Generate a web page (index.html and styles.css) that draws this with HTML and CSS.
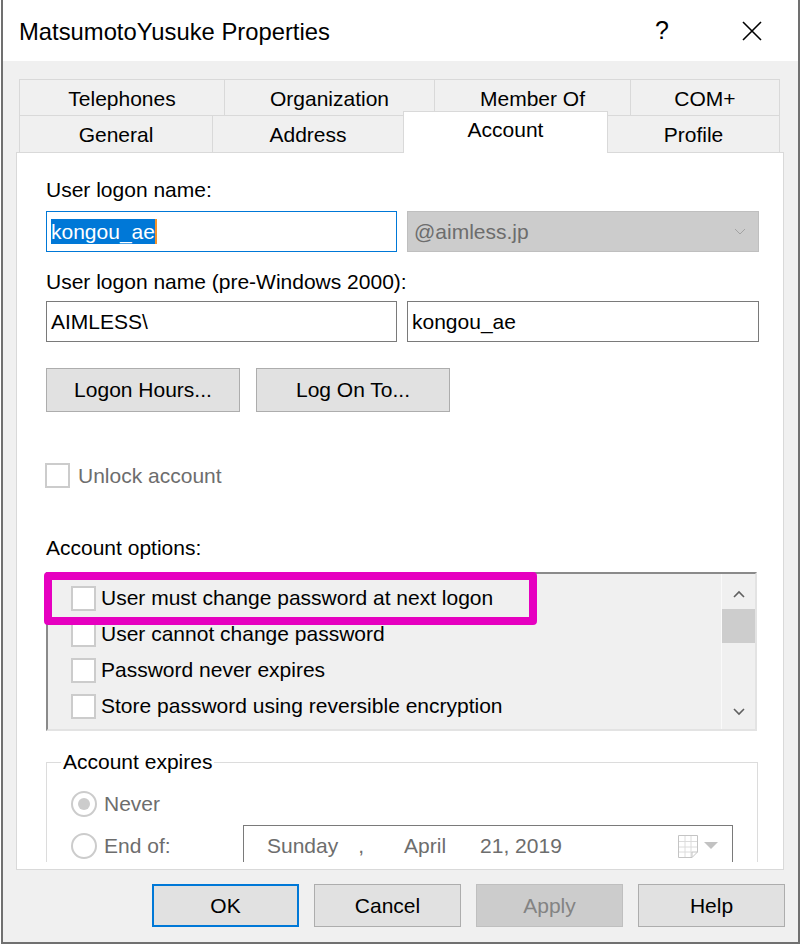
FILE: index.html
```html
<!DOCTYPE html>
<html>
<head>
<meta charset="utf-8">
<link rel="stylesheet" href="styles.css">
</head>
<body>
<div class="window">
  <div class="titlebar">
    <span class="title">MatsumotoYusuke Properties</span>
    <span class="help">?</span>
    <svg class="close" width="20" height="20" viewBox="0 0 20 20"><path d="M1 1 L19 19 M19 1 L1 19" stroke="#000" stroke-width="1.6" fill="none"/></svg>
  </div>
  <div class="main">
    <div class="tabs">
      <div class="tabrow back">
        <div class="tab w-tel">Telephones</div>
        <div class="tab w-org">Organization</div>
        <div class="tab w-mem">Member Of</div>
        <div class="tab w-com">COM+</div>
      </div>
      <div class="tabrow front">
        <div class="tab w-gen">General</div>
        <div class="tab w-adr">Address</div>
        <div class="tab sel w-acc">Account</div>
        <div class="tab w-pro">Profile</div>
      </div>
    </div>
    <div class="panel">
      <div class="page">
        <div class="label l1">User logon name:</div>
        <div class="pair p1">
          <div class="input focus"><span class="selected">kongou_ae</span><span class="caret"></span></div>
          <div class="combo"><span>@aimless.jp</span><svg class="chev" width="12" height="8" viewBox="0 0 12 8"><polyline points="1,1 6,6 11,1" fill="none" stroke="#a3a3a3" stroke-width="1"/></svg></div>
        </div>
        <div class="label l2">User logon name (pre-Windows 2000):</div>
        <div class="pair p2">
          <div class="input">AIMLESS\</div>
          <div class="input">kongou_ae</div>
        </div>
        <div class="btnrow">
          <div class="btn btn-wide">Logon Hours...</div>
          <div class="btn btn-wide">Log On To...</div>
        </div>
        <div class="check unlock"><span class="box"></span><span class="dis">Unlock account</span></div>
        <div class="label l3">Account options:</div>
        <div class="list">
          <div class="items">
            <div class="item"><span class="box"></span><span>User must change password at next logon</span></div>
            <div class="item"><span class="box"></span><span>User cannot change password</span></div>
            <div class="item"><span class="box"></span><span>Password never expires</span></div>
            <div class="item"><span class="box"></span><span>Store password using reversible encryption</span></div>
          </div>
          <div class="scroll">
            <div class="sb-up"><svg width="12" height="8" viewBox="0 0 12 8"><polyline points="1,7 6,2 11,7" fill="none" stroke="#606060" stroke-width="1.6"/></svg></div>
            <div class="sb-thumb"></div>
            <div class="sb-space"></div>
            <div class="sb-down"><svg width="12" height="8" viewBox="0 0 12 8"><polyline points="1,1 6,6 11,1" fill="none" stroke="#606060" stroke-width="1.6"/></svg></div>
          </div>
          <div class="hl"></div>
        </div>
        <fieldset class="group">
          <legend>Account expires</legend>
          <div class="rrow r1"><span class="radio on"></span><span class="dis">Never</span></div>
          <div class="rrow r2"><span class="radio"></span><span class="dis rlabel">End of:</span>
            <div class="date">
              <span>Sunday</span><span class="d-comma">,</span><span class="d-month">April</span><span class="d-rest">21, 2019</span>
              <svg class="cal" width="20" height="23" viewBox="0 0 20 23"><path d="M0.5 0.5 H19.5 V17 L14 22.5 H0.5 Z" fill="#fff" stroke="#c4c4c4"/><path d="M7 1 V22 M13 1 V22 M1 6.5 H19 M1 12 H19 M1 17 H14" stroke="#dcdcdc" fill="none"/><path d="M14 22.5 V17 H19.5" stroke="#c4c4c4" fill="none"/></svg>
              <svg class="tri" width="14" height="7" viewBox="0 0 14 7"><polygon points="0,0 14,0 7,7" fill="#c2c2c2"/></svg>
            </div>
          </div>
        </fieldset>
      </div>
    </div>
    <div class="buttons">
      <div class="btn btn-d default">OK</div>
      <div class="btn btn-d">Cancel</div>
      <div class="btn btn-d disabled">Apply</div>
      <div class="btn btn-d">Help</div>
    </div>
  </div>
</div>
</body>
</html>
```
FILE: styles.css
```css
html, body {
  margin: 0;
  background: #ffffff;
}
body {
  font-family: "Liberation Sans", Arial, sans-serif;
  font-size: 21px;
  line-height: 24px;
  color: #000;
}
.window {
  margin-left: 1px;
  width: 799px;
  height: 944px;
  box-sizing: border-box;
  border: 2px solid #707070;
  border-top: 0;
  display: flex;
  flex-direction: column;
  background: #f0f0f0;
}
.titlebar {
  height: 61px;
  flex: none;
  background: #fff;
  display: flex;
  align-items: flex-start;
  padding-left: 16px;
}
.title {
  flex: 1;
  font-size: 23.8px;
  line-height: 28px;
  padding-top: 18px;
}
.help {
  width: 14px;
  font-size: 25px;
  line-height: 28px;
  padding-top: 16px;
  margin-right: 73px;
}
.close {
  margin-top: 21px;
  margin-right: 36px;
}
.main {
  flex: 1;
  padding: 18px 14px 0 13px;
}
.tabs {
  margin: 0 4px 0 3px;
}
.tabrow {
  display: flex;
  height: 36px;
}
.tabrow.front {
  height: 37px;
}
.tab {
  box-sizing: border-box;
  height: 36px;
  border: 1px solid #d9d9d9;
  border-right: 0;
  border-bottom: 0;
  text-align: center;
  padding-top: 7px;
}
.tab:last-child {
  border-right: 1px solid #d9d9d9;
}
.front .tab {
  height: 37px;
}
.tab.sel {
  position: relative;
  z-index: 1;
  background: #fff;
  margin-top: -4px;
  height: 42px;
  padding-top: 6px;
  border-right: 1px solid #d9d9d9;
}
.tab.sel + .tab {
  border-left: 0;
}
.w-tel { width: 205px; }
.w-org { width: 210px; }
.w-mem { width: 196px; }
.w-com { width: 150px; }
.w-gen { width: 193px; }
.w-adr { width: 191px; }
.w-acc { width: 205px; }
.w-pro { width: 172px; }

.panel {
  background: #fff;
  border: 1px solid #d9d9d9;
  padding-bottom: 7px;
}
.page {
  height: 709px;
  box-sizing: border-box;
  overflow: hidden;
  padding: 25px 0 0 29px;
}
.label {
  height: 24px;
}
.l2 { margin-top: 18px; }
.l3 { margin-top: 48px; }
.pair {
  display: grid;
  grid-template-columns: 351px 352px;
  column-gap: 10px;
}
.p1 { margin-top: 9px; }
.p2 { margin-top: 7px; }
.input, .combo {
  height: 41px;
  box-sizing: border-box;
  display: flex;
  align-items: center;
  line-height: 25px;
  background: #fff;
  border: 1px solid #7a7a7a;
  padding: 0 4px;
}
.input.focus {
  border-color: #0078d7;
}
.selected {
  background: #0078d7;
  color: #fff;
}
.caret {
  display: inline-block;
  width: 2px;
  height: 25px;
  background: #f5922a;
}
.combo {
  background: #cccccc;
  border-color: #bfbfbf;
  color: #6d6d6d;
  padding: 0 12px 0 6px;
  justify-content: space-between;
}
.btnrow {
  margin-top: 26px;
  display: flex;
  gap: 16px;
}
.btn {
  box-sizing: border-box;
  background: #e1e1e1;
  border: 1px solid #adadad;
  display: flex;
  align-items: center;
  justify-content: center;
}
.btn-wide {
  width: 194px;
  height: 44px;
}
.check {
  display: flex;
  align-items: center;
  gap: 8px;
  height: 25px;
}
.unlock {
  margin-top: 51px;
  margin-left: -1px;
}
.box {
  flex: none;
  width: 25px;
  height: 25px;
  box-sizing: border-box;
  border: 2px solid #cccccc;
  background: #fff;
}
.dis {
  color: #6d6d6d;
}
.list {
  position: relative;
  margin-top: 12px;
  width: 711px;
  height: 159px;
  box-sizing: border-box;
  border: 2px solid;
  border-color: #8a8a8a #e3e3e3 #e3e3e3 #8a8a8a;
  background: #f0f0f0;
  display: flex;
}
.items {
  flex: 1;
  padding-top: 6px;
}
.item {
  height: 36px;
  display: flex;
  align-items: center;
  gap: 5px;
  padding-left: 23px;
  white-space: nowrap;
}
.scroll {
  width: 33px;
  border-left: 1px solid #fafafa;
  display: flex;
  flex-direction: column;
}
.sb-up, .sb-down {
  height: 35px;
  box-sizing: border-box;
  display: flex;
  justify-content: center;
  align-items: flex-start;
}
.sb-up { padding-top: 16px; }
.sb-down { padding-top: 14px; }
.sb-thumb {
  height: 34px;
  background: #cdcdcd;
}
.sb-space {
  flex: 1;
}
.hl {
  position: absolute;
  left: -4px;
  top: -2px;
  width: 493px;
  height: 53px;
  box-sizing: border-box;
  border: 8px solid #e600c0;
  border-radius: 4px;
}
.group {
  margin: 19px 0 0 0;
  width: 712px;
  box-sizing: border-box;
  min-width: 0;
  padding: 0 0 40px 24px;
  border: 1px solid #dcdcdc;
}
.group legend {
  padding: 0 2px;
  margin-left: -10px;
  line-height: 24px;
}
.rrow {
  display: flex;
  align-items: center;
}
.r1 {
  margin-top: 17px;
  gap: 7px;
}
.r2 {
  margin-top: 8px;
}
.radio {
  flex: none;
  width: 26px;
  height: 26px;
  box-sizing: border-box;
  border: 2px solid #cccccc;
  border-radius: 50%;
  background: #fff;
  display: flex;
  align-items: center;
  justify-content: center;
}
.radio.on::after {
  content: "";
  width: 12px;
  height: 12px;
  border-radius: 50%;
  background: #cccccc;
}
.rlabel {
  width: 139px;
  margin-left: 7px;
}
.date {
  width: 490px;
  height: 41px;
  box-sizing: border-box;
  border: 1px solid #7a7a7a;
  background: #fff;
  color: #6d6d6d;
  display: flex;
  align-items: center;
  padding: 0 14px 0 23px;
}
.d-comma { margin-left: 20px; }
.d-month { margin-left: 40px; }
.d-rest { margin-left: 34px; }
.cal {
  margin-left: auto;
  margin-top: 2px;
}
.tri {
  margin-left: 6px;
}
.buttons {
  margin-top: 14px;
  margin-right: -1px;
  display: flex;
  justify-content: flex-end;
  gap: 15px;
}
.btn-d {
  width: 147px;
  height: 43px;
}
.btn.default {
  border: 2px solid #0078d7;
}
.btn.disabled {
  background: #cccccc;
  border-color: #bfbfbf;
  color: #838383;
}
```
